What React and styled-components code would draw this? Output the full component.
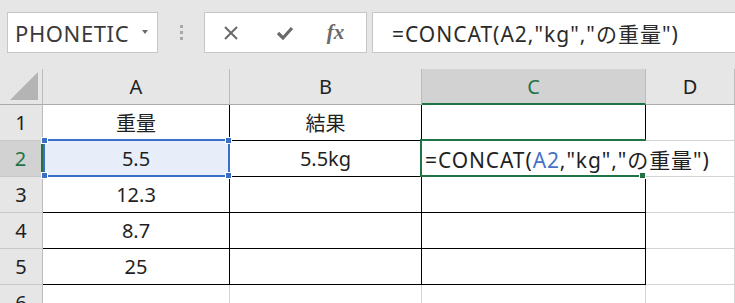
import React from 'react'
import styled, { createGlobalStyle } from 'styled-components'

const GlobalStyle = createGlobalStyle`
  html, body {
    margin: 0;
    padding: 0;
    background: #ffffff;
    overflow: hidden;
  }
  body {
    font-family: "Noto Sans", "Noto Sans CJK JP", sans-serif;
    color: #1f1f1f;
  }
`

const COLUMNS = ['A', 'B', 'C', 'D']
const ROWS = [
  ['重量', '結果', '', ''],
  ['5.5', '5.5kg', '', ''],
  ['12.3', '', '', ''],
  ['8.7', '', '', ''],
  ['25', '', '', ''],
  ['', '', '', ''],
]

const XIcon = () => (
  <svg width='16' height='16' viewBox='0 0 16 16'>
    <path d='M2 2 L14 14 M14 2 L2 14' stroke='#6a6a6a' strokeWidth='2' fill='none' />
  </svg>
)

const CheckIcon = () => (
  <svg width='18' height='16' viewBox='0 0 18 16'>
    <path d='M2 8 L7 13 L16 3' stroke='#6a6a6a' strokeWidth='3.2' fill='none' />
  </svg>
)

const App = () => {
  return (
    <Page>
      <GlobalStyle />
      <Toolbar>
        <NameBox>
          <NameText>PHONETIC</NameText>
          <Arrow />
        </NameBox>
        <Separator>
          <Dot />
          <Dot />
          <Dot />
        </Separator>
        <FxBox>
          <FxButton><XIcon /></FxButton>
          <FxButton><CheckIcon /></FxButton>
          <FxButton><FxLabel>fx</FxLabel></FxButton>
        </FxBox>
        <FormulaBox>=CONCAT(A2,"kg","の重量")</FormulaBox>
      </Toolbar>

      <Sheet>
        <Corner>
          <Triangle />
        </Corner>
        {COLUMNS.map(col => (
          <ColHeader key={col} $selected={col === 'C'}>{col}</ColHeader>
        ))}

        {ROWS.map((row, rowIndex) => {
          const rowNumber = rowIndex + 1
          const inTable = rowNumber <= 5
          return (
            <React.Fragment key={rowNumber}>
              <RowHeader $selected={rowNumber === 2}>{rowNumber}</RowHeader>
              {row.map((value, colIndex) => {
                const col = COLUMNS[colIndex]
                const isRef = col === 'A' && rowNumber === 2
                const isActive = col === 'C' && rowNumber === 2
                return (
                  <Cell
                    key={col}
                    $table={inTable && colIndex < 3}
                    $noRight={isActive}
                    $align={isActive ? 'left' : 'center'}
                  >
                    {isRef && (
                      <RefBox>
                        <Handle $pos='tl' />
                        <Handle $pos='tr' />
                        <Handle $pos='bl' />
                        <Handle $pos='br' />
                      </RefBox>
                    )}
                    {isActive && (
                      <ActiveBox>
                        <FillHandle />
                      </ActiveBox>
                    )}
                    {isActive ? (
                      <EditText>
                        =CONCAT(<RefText>A2</RefText>,"kg","の重量")
                      </EditText>
                    ) : (
                      <CellText>{value}</CellText>
                    )}
                  </Cell>
                )
              })}
            </React.Fragment>
          )
        })}
      </Sheet>
    </Page>
  )
}

const Page = styled.div`
  width: 735px;
  height: 303px;
  overflow: hidden;
`

const Toolbar = styled.div`
  display: flex;
  align-items: flex-start;
  height: 69px;
  box-sizing: border-box;
  padding: 12px 0 0 7px;
  background: #e6e6e6;
`

const NameBox = styled.div`
  display: flex;
  align-items: center;
  justify-content: space-between;
  width: 151px;
  height: 41px;
  box-sizing: border-box;
  padding: 0 9px 0 7px;
  background: #ffffff;
  border: 1px solid #c6c6c6;
`

const NameText = styled.span`
  font-size: 22px;
  letter-spacing: 0.6px;
  color: #3a3a3a;
`

const Arrow = styled.span`
  width: 0;
  height: 0;
  margin-top: -2px;
  border-left: 3.5px solid transparent;
  border-right: 3.5px solid transparent;
  border-top: 4px solid #6a6a6a;
`

const Separator = styled.div`
  display: flex;
  flex-direction: column;
  align-items: center;
  justify-content: center;
  gap: 3px;
  width: 46px;
  height: 41px;
`

const Dot = styled.span`
  width: 3px;
  height: 3px;
  background: #a8a8a8;
`

const FxBox = styled.div`
  display: grid;
  grid-template-columns: 52px 56px 1fr;
  width: 163px;
  height: 41px;
  box-sizing: border-box;
  background: #ffffff;
  border: 1px solid #c6c6c6;
`

const FxButton = styled.div`
  display: flex;
  align-items: center;
  justify-content: center;
`

const FxLabel = styled.span`
  font-family: "Liberation Serif", serif;
  font-style: italic;
  font-weight: bold;
  font-size: 21px;
  color: #6a6a6a;
  margin-right: 8px;
`

const FormulaBox = styled.div`
  flex: 1;
  display: flex;
  align-items: center;
  height: 41px;
  margin: 0 -10px 0 5px;
  box-sizing: border-box;
  padding-left: 19px;
  background: #ffffff;
  border: 1px solid #c6c6c6;
  font-size: 21px;
  letter-spacing: 1px;
  color: #2b2b2b;
  white-space: nowrap;
`

const Sheet = styled.div`
  display: grid;
  grid-template-columns: 43px 187px 192px 224px 1fr;
  grid-auto-rows: 36px;
  background: #ffffff;
`

const Corner = styled.div`
  display: flex;
  align-items: flex-end;
  justify-content: flex-end;
  box-sizing: border-box;
  padding: 0 4px 4px 0;
  background: #e6e6e6;
  border-right: 1px solid #bcbcbc;
  border-bottom: 1px solid #ababab;
`

const Triangle = styled.div`
  width: 28px;
  height: 28px;
  background: #b4b4b4;
  clip-path: polygon(100% 0, 100% 100%, 0 100%);
`

const ColHeader = styled.div`
  display: flex;
  align-items: center;
  justify-content: center;
  box-sizing: border-box;
  font-size: 20px;
  background: ${p => (p.$selected ? '#d2d2d2' : '#e6e6e6')};
  color: ${p => (p.$selected ? '#217346' : '#1f1f1f')};
  border-right: 1px solid #bcbcbc;
  border-bottom: ${p => (p.$selected ? '2px solid #217346' : '1px solid #ababab')};
`

const RowHeader = styled.div`
  display: flex;
  align-items: center;
  justify-content: center;
  box-sizing: border-box;
  font-size: 20px;
  background: ${p => (p.$selected ? '#d2d2d2' : '#e6e6e6')};
  color: ${p => (p.$selected ? '#217346' : '#1f1f1f')};
  border-right: ${p => (p.$selected ? '2px solid #217346' : '1px solid #bcbcbc')};
  border-bottom: 1px solid #c8c8c8;
`

const Cell = styled.div`
  position: relative;
  display: flex;
  align-items: center;
  justify-content: ${p => (p.$align === 'left' ? 'flex-start' : 'center')};
  box-sizing: border-box;
  padding-left: ${p => (p.$align === 'left' ? '3px' : '0')};
  font-size: 20px;
  white-space: nowrap;
  border-right: 1px solid ${p => (p.$noRight ? 'transparent' : p.$table ? '#000000' : '#d4d4d4')};
  border-bottom: 1px solid ${p => (p.$table ? '#000000' : '#d4d4d4')};
`

const CellText = styled.span`
  position: relative;
  z-index: 2;
`

const EditText = styled.span`
  position: relative;
  z-index: 3;
  font-size: 21px;
  letter-spacing: 0.9px;
  color: #1f1f1f;
`

const RefText = styled.span`
  color: #4472c4;
`

const RefBox = styled.div`
  position: absolute;
  top: -2px;
  left: 0;
  right: -1px;
  bottom: -1px;
  z-index: 1;
  background: #e8eef9;
  border: 2px solid #3a6fc6;
`

const handlePos = {
  tl: 'top: -4px; left: -4px;',
  tr: 'top: -4px; right: -4px;',
  bl: 'bottom: -4px; left: -4px;',
  br: 'bottom: -4px; right: -4px;',
}

const Handle = styled.span`
  position: absolute;
  ${p => handlePos[p.$pos]}
  width: 5px;
  height: 5px;
  background: #3a6fc6;
  border: 1px solid #ffffff;
`

const ActiveBox = styled.div`
  position: absolute;
  top: -2px;
  left: -2px;
  right: -1px;
  bottom: -1px;
  z-index: 2;
  border: 2px solid #217346;
  border-right: none;
`

const FillHandle = styled.span`
  position: absolute;
  right: 0;
  bottom: -4px;
  width: 5px;
  height: 5px;
  background: #217346;
  border: 1px solid #ffffff;
`

export default App
